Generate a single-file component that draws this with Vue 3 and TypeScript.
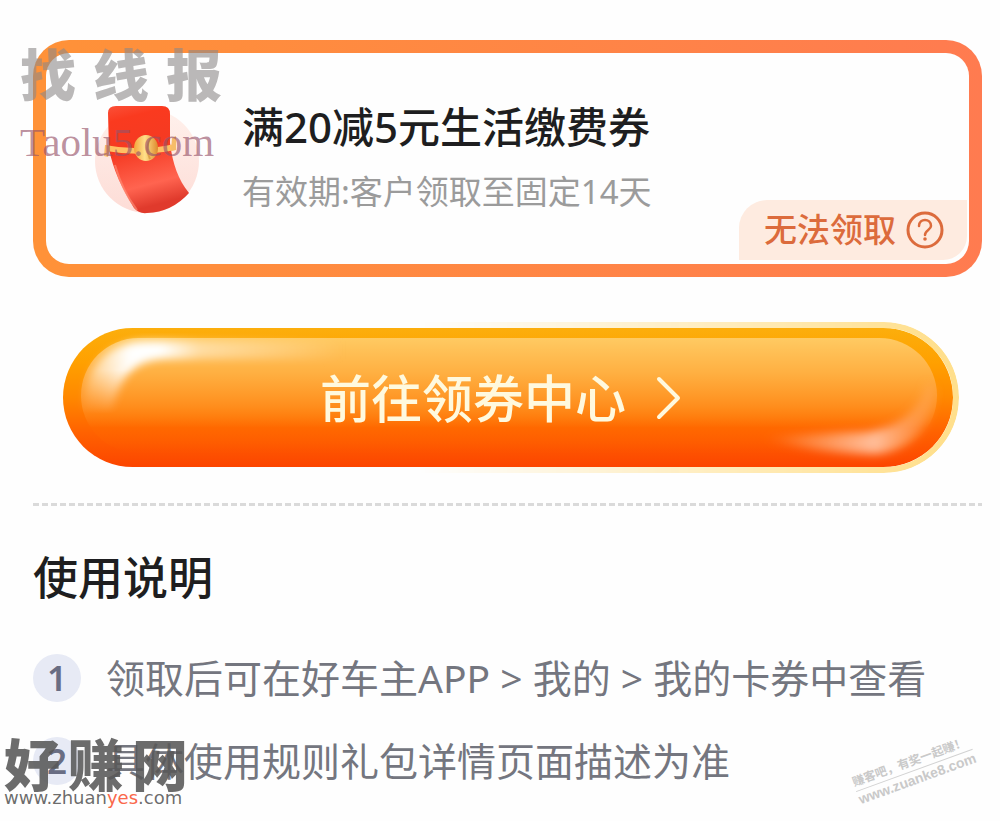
<script setup lang="ts">
interface Coupon {
  title: string
  validity: string
  status: string
}

const coupon: Coupon = {
  title: '满20减5元生活缴费券',
  validity: '有效期:客户领取至固定14天',
  status: '无法领取',
}

const instructions: string[] = [
  '领取后可在好车主APP > 我的 > 我的卡券中查看',
  '具体使用规则礼包详情页面描述为准',
]

const brand: string[] = ['找', '线', '报']
const site: string[] = ['好', '赚', '网']
</script>

<template>
  <main class="page">
    <section class="card">
      <svg class="packet" viewBox="0 0 112 116" aria-hidden="true">
        <defs>
          <linearGradient id="body" x1="0" y1="0" x2="0.2" y2="1">
            <stop offset="0" stop-color="#fb5038" />
            <stop offset="0.15" stop-color="#fa3a1f" />
            <stop offset="0.45" stop-color="#f53a22" />
            <stop offset="0.8" stop-color="#ff6450" />
            <stop offset="1" stop-color="#e03a2c" />
          </linearGradient>
          <linearGradient id="halo" x1="0" y1="0" x2="0" y2="1">
            <stop offset="0" stop-color="#fff1ec" />
            <stop offset="1" stop-color="#fddcd6" />
          </linearGradient>
          <linearGradient id="gold" x1="0" y1="0" x2="1" y2="0">
            <stop offset="0" stop-color="#f3a53c" />
            <stop offset="0.45" stop-color="#ffe08a" />
            <stop offset="1" stop-color="#dd8a2c" />
          </linearGradient>
        </defs>
        <circle cx="55" cy="62" r="52" fill="url(#halo)" />
        <path d="M16 14Q16 7 24 7H70Q78 7 78 15V44C81 66 86 80 97 94Q80 113 55 114Q47 115 42 109C30 90 21 70 17 50Z" fill="url(#body)" />
        <path d="M23 66C28 84 35 98 45 111" fill="none" stroke="#ff927c" stroke-width="2" opacity="0.6" />
        <path d="M13 46Q48 53 83 45V51Q48 58 14 52Z" fill="#ffc063" />
        <path d="M13 46L18 47L16 58L12 57ZM80 39L84 37V51L79 52Z" fill="#f6bd69" />
        <ellipse cx="54" cy="49" rx="12" ry="13" fill="url(#gold)" />
        <path d="M59 39Q52 48 58 60" fill="none" stroke="#d18a31" stroke-width="2" opacity="0.6" />
      </svg>
      <div class="info">
        <h1 class="title">{{ coupon.title }}</h1>
        <p class="validity">{{ coupon.validity }}</p>
      </div>
      <button class="status" type="button">
        {{ coupon.status }}
        <svg class="help" viewBox="0 0 38 38" aria-hidden="true">
          <circle cx="19" cy="19" r="17" fill="none" stroke="currentColor" stroke-width="3" />
          <path d="M13 15C13 7 25 7 25 15C25 19 19 19 19 24" fill="none" stroke="currentColor" stroke-width="2.5" stroke-linecap="round" />
          <circle cx="19" cy="28" r="1.8" fill="currentColor" />
        </svg>
      </button>
    </section>

    <button class="cta" type="button">
      <svg class="shine shine-left" viewBox="0 0 300 139" aria-hidden="true">
        <defs>
          <linearGradient id="shineL" x1="0" y1="0" x2="1" y2="0">
            <stop offset="0" stop-color="#fff" stop-opacity="0.3" />
            <stop offset="0.18" stop-color="#fff" />
            <stop offset="0.3" stop-color="#fff" />
            <stop offset="0.45" stop-color="#fff" stop-opacity="0.45" />
            <stop offset="1" stop-color="#fff" stop-opacity="0" />
          </linearGradient>
          <linearGradient id="fadeL" x1="0" y1="0" x2="0" y2="1">
            <stop offset="0.3" stop-color="#fff" />
            <stop offset="0.62" stop-color="#000" />
          </linearGradient>
          <mask id="maskL">
            <rect width="300" height="139" fill="url(#fadeL)" />
          </mask>
          <filter id="softL" x="-20%" y="-20%" width="140%" height="140%">
            <feGaussianBlur stdDeviation="4" />
          </filter>
        </defs>
        <g mask="url(#maskL)">
          <path d="M20 90C18 38 45 13 86 13H280V31H100C70 33 56 48 48 90Z" fill="url(#shineL)" filter="url(#softL)" />
        </g>
      </svg>
      <svg class="shine shine-right" viewBox="0 0 240 139" aria-hidden="true">
        <defs>
          <linearGradient id="shineR" x1="0" y1="0" x2="1" y2="0">
            <stop offset="0" stop-color="#ffc9a0" stop-opacity="0" />
            <stop offset="0.65" stop-color="#ffc9ac" stop-opacity="0.9" />
            <stop offset="1" stop-color="#ffae6a" stop-opacity="0.3" />
          </linearGradient>
          <filter id="softR" x="-20%" y="-20%" width="140%" height="140%">
            <feGaussianBlur stdDeviation="5" />
          </filter>
        </defs>
        <path d="M50 110C100 106 125 105 154 104C188 99 208 81 214 55L222 60C224 100 192 126 160 126C120 125 82 120 50 110Z" fill="url(#shineR)" filter="url(#softR)" />
      </svg>
      <span class="cta-label">前往领券中心</span>
      <svg class="chevron" viewBox="0 0 26 44" aria-hidden="true">
        <path d="M3 3L22 22L3 41" fill="none" stroke="#fff9de" stroke-width="4" stroke-linecap="round" stroke-linejoin="round" />
      </svg>
    </button>

    <hr class="divider" />

    <section>
      <h2 class="heading">使用说明</h2>
      <ol class="steps">
        <li v-for="(text, index) in instructions" :key="text" class="step">
          <span class="number">{{ index + 1 }}</span>
          <span>{{ text }}</span>
        </li>
      </ol>
    </section>

    <div class="mark mark-top">
      <div class="brand">
        <span v-for="char in brand" :key="char">{{ char }}</span>
      </div>
      <div class="domain">Taolu5.com</div>
    </div>
    <div class="mark mark-bottom">
      <div class="site">
        <span v-for="char in site" :key="char">{{ char }}</span>
      </div>
      <div class="url">www.zhuan<span class="accent">yes</span>.com</div>
    </div>
    <div class="mark mark-corner">
      <div class="slogan">赚客吧，有奖一起赚！</div>
      <div class="corner-url">www.zuanke8.com</div>
    </div>
  </main>
</template>

<style>
body {
  margin: 0;
  background: #fefefe;
}
</style>

<style scoped>
.page {
  position: relative;
  box-sizing: border-box;
  min-height: 100vh;
  padding: 40px 18px 28px 33px;
  overflow: hidden;
  color: #1e1e20;
  font-family: "Noto Sans", "Noto Sans CJK SC", sans-serif;
}

.card {
  position: relative;
  display: flex;
  gap: 38px;
  padding: 46px 46px 49px;
  border: 13px solid transparent;
  border-radius: 36px;
  background:
    linear-gradient(#fefefe, #fefefe) padding-box,
    linear-gradient(90deg, #ff9238, #ff7b50) border-box;
}

.packet {
  flex: none;
  width: 112px;
  height: 116px;
}

.title {
  margin: 0 0 15px;
  font-size: 42px;
  font-weight: 500;
  line-height: 56px;
}

.validity {
  margin: 0;
  color: #9b9b9b;
  font-size: 33px;
  line-height: 44px;
}

.status {
  position: absolute;
  right: 2px;
  bottom: 4px;
  display: flex;
  align-items: center;
  gap: 10px;
  height: 60px;
  padding: 0 23px 0 25px;
  border: 0;
  border-radius: 28px 0 24px 0;
  background: #feebe0;
  color: #dc6b3c;
  font: 500 33px/60px "Noto Sans", "Noto Sans CJK SC", sans-serif;
}

.help {
  width: 38px;
  height: 38px;
}

.cta {
  position: relative;
  display: flex;
  align-items: center;
  justify-content: center;
  gap: 30px;
  width: calc(100% - 59px);
  height: 139px;
  margin: 51px 29px 0 30px;
  padding: 0 14px 0 0;
  border: 0;
  border-radius: 70px;
  background: linear-gradient(#fcae0c 0%, #ffa000 25%, #ff8800 50%, #ff6200 75%, #fc4500 100%);
}

.cta::before {
  position: absolute;
  inset: 10px 16px 14px 18px;
  border-radius: 60px;
  background: linear-gradient(#ffca62, #ffb042 30%, rgba(255, 145, 34, 0.9) 58%, rgba(255, 106, 0, 0.4) 78%, rgba(255, 80, 0, 0));
  content: "";
}

.cta::after {
  position: absolute;
  inset: -6px;
  border: 6px solid #ffdf8c;
  border-radius: 76px;
  mask-image: linear-gradient(90deg, transparent 40%, #000 98%);
  content: "";
}

.shine {
  position: absolute;
  top: 0;
  height: 139px;
}

.shine-left {
  left: 0;
  width: 300px;
}

.shine-right {
  right: 0;
  width: 240px;
}

.cta-label {
  position: relative;
  color: #fff9de;
  font: 500 51px/70px "Noto Sans", "Noto Sans CJK SC", sans-serif;
}

.chevron {
  position: relative;
  width: 26px;
  height: 44px;
}

.divider {
  height: 3px;
  margin: 36px 0 0;
  border: 0;
  background: repeating-linear-gradient(90deg, #dadada 0 6px, transparent 6px 9px);
}

.heading {
  margin: 42px 0;
  font-size: 45px;
  font-weight: 500;
  line-height: 60px;
}

.steps {
  display: grid;
  gap: 27px;
  margin: 0;
  padding: 0;
  list-style: none;
}

.step {
  display: flex;
  align-items: center;
  gap: 25px;
  color: #74767f;
  font-size: 39px;
  line-height: 56px;
}

.number {
  flex: none;
  width: 48px;
  height: 48px;
  border-radius: 50%;
  background: #e7eaf5;
  color: #696d83;
  font-size: 35px;
  font-weight: 600;
  line-height: 48px;
  text-align: center;
}

.mark {
  position: absolute;
  pointer-events: none;
}

.mark-top {
  top: 44px;
  left: 20px;
  width: 202px;
}

.brand {
  display: flex;
  justify-content: space-between;
  color: rgba(140, 136, 136, 0.6);
  font-size: 56px;
  font-weight: 900;
  line-height: 60px;
}

.domain {
  margin-top: 14px;
  color: rgba(150, 82, 104, 0.65);
  font: 41px/48px "Liberation Serif", serif;
}

.mark-bottom {
  bottom: 12px;
  left: 4px;
  width: 184px;
  color: rgba(88, 88, 88, 0.88);
}

.site {
  display: flex;
  justify-content: space-between;
  font-size: 56px;
  font-weight: 900;
  line-height: 46px;
}

.url {
  font: 18px/22px "DejaVu Sans", sans-serif;
}

.accent {
  color: #fa684a;
}

.mark-corner {
  right: 24px;
  bottom: 34px;
  color: #c9c9c9;
  transform: rotate(-20deg);
}

.slogan {
  border-bottom: 1px solid #d2d2d2;
  font-size: 12px;
  font-weight: 700;
  line-height: 18px;
}

.corner-url {
  font: bold 14px/16px "Liberation Sans", sans-serif;
}
</style>
